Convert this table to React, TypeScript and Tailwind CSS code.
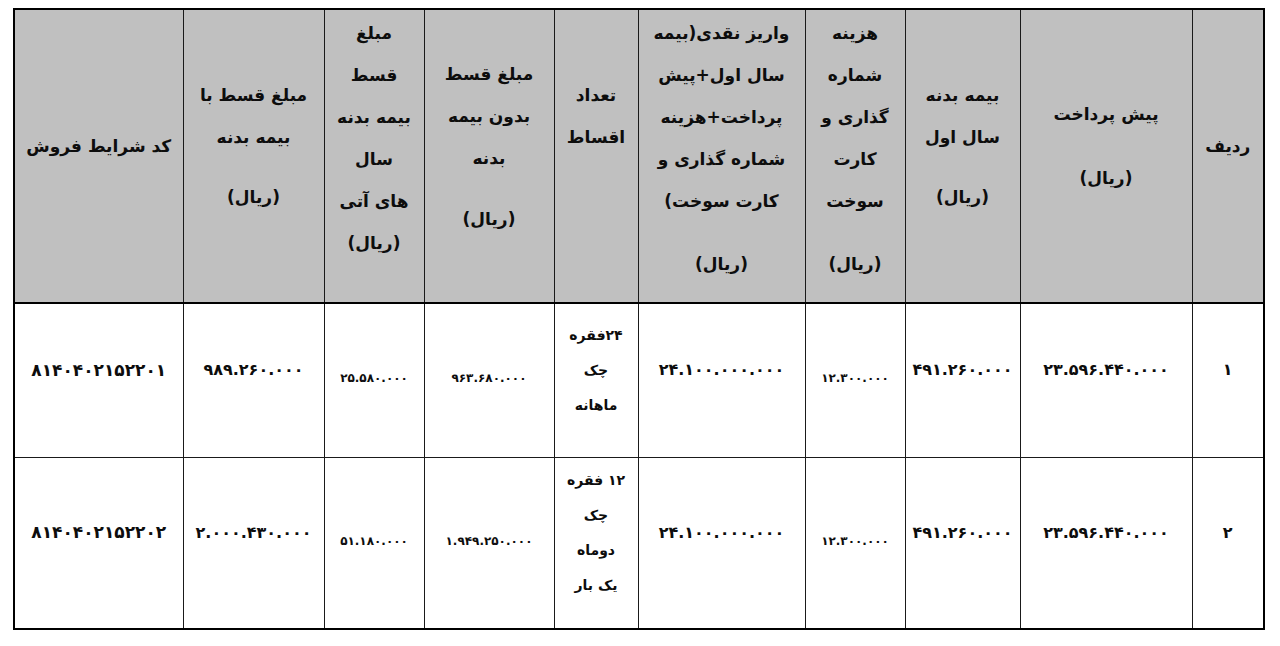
import React from 'react';

type HeadCell = {
  lines: string[];
  rial: boolean;
  rialGap?: string;
  pb: string;
  width: number;
};

const FONT = { fontFamily: '"DejaVu Sans", sans-serif' };

// RTL order: first entry is the rightmost column
const heads: HeadCell[] = [
  { lines: ['ردیف'], rial: false, pb: 'pb-5', width: 72 },
  { lines: ['پیش پرداخت'], rial: true, rialGap: 'mt-[22px]', pb: 'pb-5', width: 172 },
  { lines: ['بیمه بدنه', 'سال اول'], rial: true, rialGap: 'mt-[18px]', pb: 'pb-5', width: 115 },
  {
    lines: ['هزینه', 'شماره', 'گذاری و', 'کارت', 'سوخت'],
    rial: true,
    rialGap: 'mt-[21px]',
    pb: 'pb-4',
    width: 100,
  },
  {
    lines: ['واریز نقدی(بیمه', 'سال اول+پیش', 'پرداخت+هزینه', 'شماره گذاری و', 'کارت سوخت)'],
    rial: true,
    rialGap: 'mt-[21px]',
    pb: 'pb-4',
    width: 167,
  },
  { lines: ['تعداد', 'اقساط'], rial: false, pb: 'pb-[80px]', width: 84 },
  { lines: ['مبلغ قسط', 'بدون بیمه', 'بدنه'], rial: true, rialGap: 'mt-[19px]', pb: 'pb-5', width: 130 },
  {
    lines: ['مبلغ', 'قسط', 'بیمه بدنه', 'سال', 'های آتی'],
    rial: true,
    rialGap: 'mt-0',
    pb: 'pb-9',
    width: 100,
  },
  { lines: ['مبلغ قسط با', 'بیمه بدنه'], rial: true, rialGap: 'mt-[18px]', pb: 'pb-5', width: 141 },
  { lines: ['کد شرایط فروش'], rial: false, pb: 'pb-5', width: 169 },
];

type Row = {
  height: string;
  cells: (string | string[])[];
};

const rows: Row[] = [
  {
    height: 'h-[154px]',
    cells: [
      '۱',
      '۲۳.۵۹۶.۴۴۰.۰۰۰',
      '۴۹۱.۲۶۰.۰۰۰',
      '۱۲.۳۰۰.۰۰۰',
      '۲۴.۱۰۰.۰۰۰.۰۰۰',
      ['۲۴فقره', 'چک', 'ماهانه'],
      '۹۶۳.۶۸۰.۰۰۰',
      '۲۵.۵۸۰.۰۰۰',
      '۹۸۹.۲۶۰.۰۰۰',
      '۸۱۴۰۴۰۲۱۵۲۲۰۱',
    ],
  },
  {
    height: 'h-[172px]',
    cells: [
      '۲',
      '۲۳.۵۹۶.۴۴۰.۰۰۰',
      '۴۹۱.۲۶۰.۰۰۰',
      '۱۲.۳۰۰.۰۰۰',
      '۲۴.۱۰۰.۰۰۰.۰۰۰',
      ['۱۲ فقره', 'چک', 'دوماه', 'یک بار'],
      '۱.۹۴۹.۲۵۰.۰۰۰',
      '۵۱.۱۸۰.۰۰۰',
      '۲.۰۰۰.۴۳۰.۰۰۰',
      '۸۱۴۰۴۰۲۱۵۲۲۰۲',
    ],
  },
];

// columns holding the smaller figures
const smallCols = [3, 6, 7];

export default function App() {
  return (
    <div className="min-h-[646px] bg-white pl-[13px] pt-[8px]" style={FONT}>
      <table
        dir="rtl"
        className="w-[1250px] table-fixed border-collapse border-2 border-black text-[#0d0d0d]"
      >
        <colgroup>
          {heads.map((h, i) => (
            <col key={i} style={{ width: h.width }} />
          ))}
        </colgroup>
        <thead>
          <tr className="h-[294px] border-b-2 border-black bg-[#c0c0c0]">
            {heads.map((h, i) => (
              <th key={i} className="border border-[#1a1a1a] p-0 align-middle font-bold">
                <div className={`flex flex-col items-center justify-center ${h.pb}`}>
                  {h.lines.map((l, j) => (
                    <span key={j} className="whitespace-nowrap text-[17px] leading-[42px]">
                      {l}
                    </span>
                  ))}
                  {h.rial && (
                    <span className={`whitespace-nowrap text-[17px] leading-[42px] ${h.rialGap}`}>
                      (ریال)
                    </span>
                  )}
                </div>
              </th>
            ))}
          </tr>
        </thead>
        <tbody>
          {rows.map((r, ri) => (
            <tr key={ri} className={`${r.height} bg-white`}>
              {r.cells.map((c, ci) => (
                <td key={ci} className="border border-[#1a1a1a] p-0 text-center align-middle font-bold">
                  {Array.isArray(c) ? (
                    <div className="flex flex-col items-center pb-5">
                      {c.map((l, j) => (
                        <span key={j} className="whitespace-nowrap text-[14px] leading-[35px]">
                          {l}
                        </span>
                      ))}
                    </div>
                  ) : smallCols.includes(ci) ? (
                    <div className="pb-1 text-[12px]">{c}</div>
                  ) : ci === 9 ? (
                    <div className="pb-5 text-[17px]">{c}</div>
                  ) : (
                    <div className="pb-5 text-[16px]">{c}</div>
                  )}
                </td>
              ))}
            </tr>
          ))}
        </tbody>
      </table>
    </div>
  );
}
